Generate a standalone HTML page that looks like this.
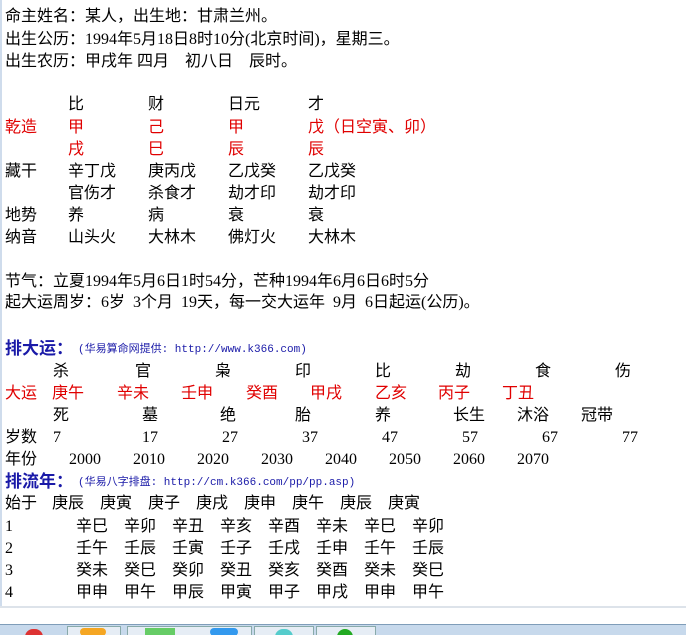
<!DOCTYPE html>
<html><head><meta charset="utf-8"><style>
html,body{margin:0;padding:0;width:686px;height:635px;overflow:hidden;background:#fff;}
body{font-family:"Liberation Serif","Noto Sans CJK SC",sans-serif;font-size:16px;color:#000;position:relative;}
.r{position:absolute;left:0;height:20px;line-height:20px;white-space:nowrap;}
.r span{position:absolute;top:0;}
.red{color:#e00000;}
.h{font-weight:bold;font-size:17px;color:#1a1aa8;}
.s{font-size:11px;color:#1a1aa8;font-family:"Liberation Mono","Noto Sans CJK SC",monospace;}
#lb{position:absolute;left:0;top:0;width:2px;height:608px;background:#cfdcec;}
#bot{position:absolute;left:0;top:606px;width:686px;height:2px;background:#dde3ea;}
#tb{position:absolute;left:0;top:624px;width:686px;height:11px;background:#c7d9ec;border-top:1px solid #7f9db9;}
.btn{position:absolute;top:626px;height:9px;background:#e6edf5;border:1px solid #8aa;}
</style></head><body>
<div id="lb"></div>
<div class="r" style="top:7px"><span style="left:5px">命主姓名：某人，出生地：甘肃兰州。</span></div>
<div class="r" style="top:30px"><span style="left:5px">出生公历：1994年5月18日8时10分(北京时间)，星期三。</span></div>
<div class="r" style="top:52px"><span style="left:5px">出生农历：甲戌年 四月　初八日　辰时。</span></div>

<div class="r" style="top:95px"><span style="left:68px">比</span><span style="left:148px">财</span><span style="left:228px">日元</span><span style="left:308px">才</span></div>
<div class="r red" style="top:118px"><span style="left:5px">乾造</span><span style="left:68px">甲</span><span style="left:148px">己</span><span style="left:228px">甲</span><span style="left:308px">戊（日空寅、卯）</span></div>
<div class="r red" style="top:140px"><span style="left:68px">戌</span><span style="left:148px">巳</span><span style="left:228px">辰</span><span style="left:308px">辰</span></div>
<div class="r" style="top:162px"><span style="left:5px">藏干</span><span style="left:68px">辛丁戊</span><span style="left:148px">庚丙戊</span><span style="left:228px">乙戊癸</span><span style="left:308px">乙戊癸</span></div>
<div class="r" style="top:184px"><span style="left:68px">官伤才</span><span style="left:148px">杀食才</span><span style="left:228px">劫才印</span><span style="left:308px">劫才印</span></div>
<div class="r" style="top:206px"><span style="left:5px">地势</span><span style="left:68px">养</span><span style="left:148px">病</span><span style="left:228px">衰</span><span style="left:308px">衰</span></div>
<div class="r" style="top:228px"><span style="left:5px">纳音</span><span style="left:68px">山头火</span><span style="left:148px">大林木</span><span style="left:228px">佛灯火</span><span style="left:308px">大林木</span></div>

<div class="r" style="top:272px"><span style="left:5px">节气：立夏1994年5月6日1时54分，芒种1994年6月6日6时5分</span></div>
<div class="r" style="top:293px"><span style="left:5px">起大运周岁：6岁&nbsp; 3个月&nbsp; 19天，每一交大运年&nbsp; 9月&nbsp; 6日起运(公历)。</span></div>

<div class="r" style="top:339px"><span style="left:5px" class="h">排大运：</span><span style="left:78px;top:1px" class="s">(华易算命网提供: http://www.k366.com)</span></div>
<div class="r" style="top:362px"><span style="left:53px">杀</span><span style="left:135px">官</span><span style="left:215px">枭</span><span style="left:295px">印</span><span style="left:375px">比</span><span style="left:455px">劫</span><span style="left:535px">食</span><span style="left:615px">伤</span></div>
<div class="r red" style="top:384px"><span style="left:5px">大运</span><span style="left:52px">庚午</span><span style="left:117px">辛未</span><span style="left:181px">壬申</span><span style="left:246px">癸酉</span><span style="left:310px">甲戌</span><span style="left:375px">乙亥</span><span style="left:438px">丙子</span><span style="left:502px">丁丑</span></div>
<div class="r" style="top:406px"><span style="left:53px">死</span><span style="left:142px">墓</span><span style="left:220px">绝</span><span style="left:295px">胎</span><span style="left:375px">养</span><span style="left:453px">长生</span><span style="left:517px">沐浴</span><span style="left:581px">冠带</span></div>
<div class="r" style="top:428px"><span style="left:5px">岁数</span><span style="left:53px">7</span><span style="left:142px">17</span><span style="left:222px">27</span><span style="left:302px">37</span><span style="left:382px">47</span><span style="left:462px">57</span><span style="left:542px">67</span><span style="left:622px">77</span></div>
<div class="r" style="top:450px"><span style="left:5px">年份</span><span style="left:69px">2000</span><span style="left:133px">2010</span><span style="left:197px">2020</span><span style="left:261px">2030</span><span style="left:325px">2040</span><span style="left:389px">2050</span><span style="left:453px">2060</span><span style="left:517px">2070</span></div>

<div class="r" style="top:472px"><span style="left:5px" class="h">排流年：</span><span style="left:78px;top:1px" class="s">(华易八字排盘: http://cm.k366.com/pp/pp.asp)</span></div>
<div class="r" style="top:494px"><span style="left:5px">始于</span><span style="left:52px">庚辰</span><span style="left:100px">庚寅</span><span style="left:148px">庚子</span><span style="left:196px">庚戌</span><span style="left:244px">庚申</span><span style="left:292px">庚午</span><span style="left:340px">庚辰</span><span style="left:388px">庚寅</span></div>
<div class="r" style="top:517px"><span style="left:5px">1</span><span style="left:76px">辛巳</span><span style="left:124px">辛卯</span><span style="left:172px">辛丑</span><span style="left:220px">辛亥</span><span style="left:268px">辛酉</span><span style="left:316px">辛未</span><span style="left:364px">辛巳</span><span style="left:412px">辛卯</span></div>
<div class="r" style="top:539px"><span style="left:5px">2</span><span style="left:76px">壬午</span><span style="left:124px">壬辰</span><span style="left:172px">壬寅</span><span style="left:220px">壬子</span><span style="left:268px">壬戌</span><span style="left:316px">壬申</span><span style="left:364px">壬午</span><span style="left:412px">壬辰</span></div>
<div class="r" style="top:561px"><span style="left:5px">3</span><span style="left:76px">癸未</span><span style="left:124px">癸巳</span><span style="left:172px">癸卯</span><span style="left:220px">癸丑</span><span style="left:268px">癸亥</span><span style="left:316px">癸酉</span><span style="left:364px">癸未</span><span style="left:412px">癸巳</span></div>
<div class="r" style="top:583px"><span style="left:5px">4</span><span style="left:76px">甲申</span><span style="left:124px">甲午</span><span style="left:172px">甲辰</span><span style="left:220px">甲寅</span><span style="left:268px">甲子</span><span style="left:316px">甲戌</span><span style="left:364px">甲申</span><span style="left:412px">甲午</span></div>
<div id="bot"></div>
<div id="tb"></div>
<div class="btn" style="left:67px;width:52px"></div>
<div class="btn" style="left:127px;width:123px"></div>
<div class="btn" style="left:254px;width:58px"></div>
<div class="btn" style="left:316px;width:58px"></div>
<div style="position:absolute;left:25px;top:629px;width:18px;height:8px;border-radius:9px 9px 0 0;background:#d33;"></div>
<div style="position:absolute;left:80px;top:628px;width:26px;height:8px;border-radius:4px;background:#f5a623;"></div>
<div style="position:absolute;left:145px;top:628px;width:30px;height:8px;background:#6c6;"></div>
<div style="position:absolute;left:210px;top:628px;width:28px;height:8px;border-radius:5px;background:#39e;"></div>
<div style="position:absolute;left:275px;top:629px;width:18px;height:8px;border-radius:9px 9px 0 0;background:#5cc;"></div>
<div style="position:absolute;left:337px;top:629px;width:16px;height:8px;border-radius:8px 8px 0 0;background:#2a2;"></div>
</body></html>
